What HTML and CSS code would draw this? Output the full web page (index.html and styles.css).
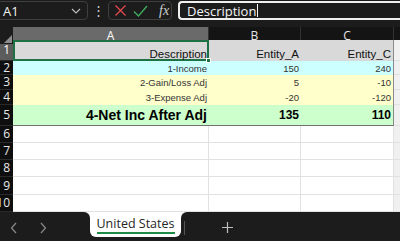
FILE: index.html
```html
<!DOCTYPE html>
<html lang="en">
<head>
  <meta charset="UTF-8" />
  <title>United States</title>
  <link rel="stylesheet" href="styles.css">
</head>
<body>
  <div class="toolbar">
    <div class="namebox">
      <span>A1</span>
      <svg width="10" height="6" viewBox="0 0 10 6"><path d="M1 1l4 4 4-4" fill="none" stroke="#bbb" stroke-width="1.2"/></svg>
    </div>
    <div class="dots">&#8942;</div>
    <div class="fxgroup">
      <svg width="13" height="13" viewBox="0 0 13 13"><path d="M1.5 1.5l10 10M11.5 1.5l-10 10" stroke="#e5484d" stroke-width="1.3"/></svg>
      <svg width="15" height="12" viewBox="0 0 15 12"><path d="M1 6.5l4.5 4.5L14 1" fill="none" stroke="#3fae5f" stroke-width="1.3"/></svg>
      <span class="fx">fx</span>
    </div>
    <div class="formula">Description<span class="caret"></span></div>
  </div>

  <div class="sheet">
    <div class="row head">
      <div class="corner"><span class="tri"></span></div>
      <div class="colhead sel">A</div>
      <div class="colhead">B</div>
      <div class="colhead">C</div>
      <div class="colhead last"></div>
    </div>

    <div class="row r1">
      <div class="rowhead sel"><span>1</span></div>
      <div class="cell title active">Description<span class="handle"></span></div>
      <div class="cell title">Entity_A</div>
      <div class="cell title edge">Entity_C</div>
      <div class="cell scroll"></div>
    </div>
    <div class="row r2">
      <div class="rowhead"><span>2</span></div>
      <div class="cell income">1-Income</div>
      <div class="cell income">150</div>
      <div class="cell income edge">240</div>
      <div class="cell scroll"></div>
    </div>
    <div class="row r3">
      <div class="rowhead"><span>3</span></div>
      <div class="cell adj">2-Gain/Loss Adj</div>
      <div class="cell adj">5</div>
      <div class="cell adj edge">-10</div>
      <div class="cell scroll"></div>
    </div>
    <div class="row r3">
      <div class="rowhead"><span>4</span></div>
      <div class="cell adj">3-Expense Adj</div>
      <div class="cell adj">-20</div>
      <div class="cell adj edge">-120</div>
      <div class="cell scroll"></div>
    </div>
    <div class="row r5">
      <div class="rowhead"><span>5</span></div>
      <div class="cell total">4-Net Inc After Adj</div>
      <div class="cell total">135</div>
      <div class="cell total edge">110</div>
      <div class="cell scroll"></div>
    </div>

    <div class="row blank">
      <div class="rowhead"><span>6</span></div>
      <div class="cell"></div><div class="cell"></div><div class="cell"></div><div class="cell scroll"></div>
    </div>
    <div class="row blank">
      <div class="rowhead"><span>7</span></div>
      <div class="cell"></div><div class="cell"></div><div class="cell"></div><div class="cell scroll"></div>
    </div>
    <div class="row blank">
      <div class="rowhead"><span>8</span></div>
      <div class="cell"></div><div class="cell"></div><div class="cell"></div><div class="cell scroll"></div>
    </div>
    <div class="row blank tall">
      <div class="rowhead"><span>9</span></div>
      <div class="cell"></div><div class="cell"></div><div class="cell"></div><div class="cell scroll"></div>
    </div>
    <div class="row blank">
      <div class="rowhead"><span>10</span></div>
      <div class="cell"></div><div class="cell"></div><div class="cell"></div><div class="cell scroll"></div>
    </div>
  </div>

  <div class="tabbar">
    <div class="nav">
      <svg width="8" height="12" viewBox="0 0 8 12"><path d="M6 1L1.5 6 6 11" fill="none" stroke="#8a8a8a" stroke-width="1.2"/></svg>
      <svg width="8" height="12" viewBox="0 0 8 12"><path d="M2 1l4.5 5L2 11" fill="none" stroke="#8a8a8a" stroke-width="1.2"/></svg>
    </div>
    <div class="tabwrap">
      <div class="tab"><span>United States</span></div>
    </div>
    <div class="rest">
      <span class="divider"></span>
      <svg class="plus" width="11" height="11" viewBox="0 0 11 11"><path d="M5.5 0v11M0 5.5h11" stroke="#bdbdbd" stroke-width="1.2"/></svg>
    </div>
  </div>
</body>
</html>
```

FILE: styles.css
```css
* {
  box-sizing: border-box;
}
body {
  margin: 0;
  width: 400px;
  height: 241px;
  overflow: hidden;
  background: #1c1c1c;
  font-family: "Open Sans", "Noto Sans", sans-serif;
}

/* formula bar */
.toolbar {
  display: flex;
  align-items: flex-start;
  height: 27px;
  padding-top: 1px;
}
.namebox {
  margin-left: -4px;
  width: 92px;
  height: 19px;
  display: flex;
  align-items: center;
  justify-content: space-between;
  padding: 0 6px 0 6px;
  border: 1px solid #3f3f3f;
  border-radius: 4px;
  color: #f2f2f2;
  font-size: 13px;
}
.dots {
  width: 20px;
  text-align: center;
  color: #cfcfcf;
  font-size: 13px;
  line-height: 19px;
}
.fxgroup {
  width: 64px;
  height: 19px;
  display: flex;
  align-items: center;
  gap: 6px;
  padding-left: 5px;
  border: 1px solid #3f3f3f;
  border-radius: 4px;
}
.fx {
  margin-left: 5px;
  font-family: "Liberation Serif", serif;
  font-style: italic;
  font-size: 14px;
  color: #cfcfcf;
}
.formula {
  flex: 1;
  margin-left: 6px;
  height: 19px;
  display: flex;
  align-items: center;
  padding-left: 7px;
  border: 2px solid #f0f0f0;
  border-right: none;
  border-radius: 4px 0 0 4px;
  color: #f5f5f5;
  font-size: 13px;
}
.caret {
  width: 1px;
  height: 13px;
  margin-left: 1px;
  background: #f5f5f5;
}

/* grid */
.sheet {
  background: #fff;
}
.row {
  display: grid;
  grid-template-columns: 13px 196px 92px 93px 6px;
  height: 17px;
}
.row.head { height: 13px; background: #141414; }
.row.r1 { height: 21px; }
.row.r2 { height: 14px; }
.row.r3 { height: 15px; }
.row.r5 { height: 21px; }
.row.tall { height: 18px; }

.corner {
  position: relative;
  background: #1c1c1c;
}
.tri {
  position: absolute;
  right: 1px;
  bottom: 1px;
  border-left: 8px solid transparent;
  border-bottom: 8px solid #8c8c8c;
}
.colhead {
  display: flex;
  align-items: center;
  justify-content: center;
  border-right: 1px solid #333;
  color: #e6e6e6;
  font-size: 12px;
}
.colhead.sel {
  background: #6a6a6a;
  color: #fff;
}
.colhead.last { border-right: none; }

.rowhead {
  overflow: hidden;
  display: flex;
  align-items: center;
  justify-content: flex-end;
  background: #0e0e0e;
  border-bottom: 1px solid #2a2a2a;
  color: #e8e8e8;
  font-size: 12px;
  line-height: 12px;
  padding-right: 3px;
}
.rowhead span {
  white-space: nowrap;
}
.rowhead.sel {
  background: #5c5c5c;
  color: #fff;
}

.cell {
  display: flex;
  align-items: flex-end;
  justify-content: flex-end;
  padding-right: 2px;
  white-space: nowrap;
  font-family: "Liberation Sans", Arial, sans-serif;
  color: #222;
  border-right: 1px solid #e1e1e1;
  border-bottom: 1px solid #e1e1e1;
}
.cell.scroll {
  background: #f0f0f0;
  border-right: none;
}
.cell.title {
  background: #d9d9d9;
  border: none;
  font-size: 11.5px;
  color: #111;
  padding-bottom: 1px;
}
.cell.income {
  background: #ccffff;
  border: none;
  font-size: 9.5px;
  color: #333;
  align-items: center;
}
.cell.adj {
  background: #ffffcc;
  border: none;
  font-size: 9.5px;
  color: #333;
  align-items: center;
}
.cell.total {
  background: #ccffcc;
  border: none;
  border-bottom: 1px solid #707070;
  font-size: 14px;
  font-weight: bold;
  color: #000;
  align-items: center;
}
.cell.total + .cell.total { font-size: 12px; }
.cell.edge {
  border-right: 1px solid #8a8a8a;
}

.cell.active {
  position: relative;
  box-shadow: inset 0 0 0 2px #1e7145;
}
.handle {
  position: absolute;
  right: -2px;
  bottom: -2px;
  width: 5px;
  height: 5px;
  background: #1e7145;
  border: 1px solid #fff;
}

/* sheet tabs */
.tabbar {
  display: flex;
  height: 29px;
  background: #fff;
}
.nav {
  width: 90px;
  display: flex;
  align-items: center;
  gap: 21px;
  padding-left: 10px;
  padding-top: 2px;
  background: #1c1c1c;
  border-top-right-radius: 6px;
}
.tabwrap {
  width: 91px;
  background: #1c1c1c;
}
.tab {
  height: 25px;
  display: flex;
  justify-content: center;
  padding-top: 4px;
  background: #fff;
  border-radius: 0 0 6px 6px;
}
.tab span {
  height: 18px;
  border-bottom: 2px solid #1e8a47;
  color: #262626;
  font-size: 12.5px;
  line-height: 15px;
}
.rest {
  flex: 1;
  display: flex;
  align-items: center;
  padding-top: 2px;
  background: #1c1c1c;
  border-top-left-radius: 6px;
}
.divider {
  width: 1px;
  height: 14px;
  margin-left: 3px;
  background: #555;
}
.plus {
  margin-left: 37px;
}
```
